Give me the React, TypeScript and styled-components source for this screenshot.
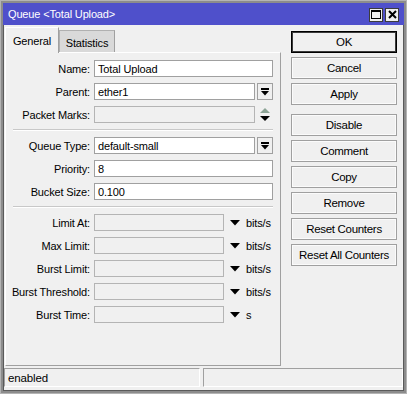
import styled, { createGlobalStyle } from "styled-components";

const GlobalStyle = createGlobalStyle`
  html, body {
    margin: 0;
    padding: 0;
    background: #f0f0f0;
  }
  body {
    font-family: "Liberation Sans", Arial, sans-serif;
    font-size: 11px;
    letter-spacing: -0.15px;
    color: #000;
  }
`;

const Window = styled.div`
  box-sizing: border-box;
  width: 407px;
  height: 394px;
  border: 3px solid #8c8c8c;
  box-shadow: inset 0 0 0 1px #5a5a5a;
  outline: 1px solid #b4b4b4;
  outline-offset: -1px;
  background: #f0f0f0;
  display: flex;
  flex-direction: column;
`;

const TitleBar = styled.div`
  height: 22px;
  flex: none;
  background: #4f50cb;
  color: #fff;
  display: flex;
  align-items: center;
  justify-content: space-between;
  padding: 0 5px 0 5px;
`;

const TitleButtons = styled.div`
  display: flex;
  gap: 2px;
  margin-top: 1px;
`;

const TitleButton = styled.div`
  box-sizing: border-box;
  width: 14px;
  height: 14px;
  background: #f0f0f0;
  border: 1px solid #3c3c3c;
  display: flex;
  align-items: center;
  justify-content: center;
`;

const Main = styled.div`
  flex: 1;
  display: flex;
  padding: 2px 7px 0 2px;
  gap: 10px;
  min-height: 0;
`;

const LeftColumn = styled.div`
  width: 276px;
  display: flex;
  flex-direction: column;
`;

const Tabs = styled.div`
  display: flex;
  align-items: flex-end;
  height: 25px;
  position: relative;
  z-index: 1;
`;

const Tab = styled.div<{ $active?: boolean }>`
  box-sizing: border-box;
  display: flex;
  align-items: center;
  justify-content: center;
  height: ${({ $active }) => ($active ? "26px" : "22px")};
  width: ${({ $active }) => ($active ? "54px" : "56px")};
  margin-bottom: ${({ $active }) => ($active ? "-1px" : "0")};
  background: ${({ $active }) => ($active ? "#f0f0f0" : "#d9d9d9")};
  border: 1px solid ${({ $active }) => ($active ? "#fff" : "#b0b0b0")};
  border-right-color: #a0a0a0;
  border-bottom: none;
  padding-top: ${({ $active }) => ($active ? "0" : "2px")};
`;

const Panel = styled.div`
  flex: 1;
  box-sizing: border-box;
  border: 1px solid #a0a0a0;
  border-top-color: #fff;
  border-left-color: #fff;
  padding: 7px 0 0 0;
  display: flex;
  flex-direction: column;
  gap: 6px;
`;

const Row = styled.div`
  display: flex;
  align-items: center;
  height: 17px;
`;

const Label = styled.div`
  width: 84px;
  margin-right: 4px;
  text-align: right;
  white-space: nowrap;
`;

const Input = styled.div<{ $width: number; $disabled?: boolean }>`
  box-sizing: border-box;
  width: ${({ $width }) => $width}px;
  height: 17px;
  border: 1px solid ${({ $disabled }) => ($disabled ? "#b4b4b4" : "#a0a0a0")};
  background: ${({ $disabled }) => ($disabled ? "#f0f0f0" : "#fff")};
  padding-left: 3px;
  display: flex;
  align-items: center;
`;

const DropButton = styled.div`
  box-sizing: border-box;
  width: 16px;
  height: 17px;
  margin-left: 2px;
  border: 1px solid #a0a0a0;
  background: #f0f0f0;
  display: flex;
  align-items: center;
  justify-content: center;
`;

const SpinIcon = styled.div`
  margin-left: 5px;
  display: flex;
`;

const UnitArrow = styled.div`
  margin-left: 6px;
  display: flex;
`;

const Unit = styled.span`
  margin-left: 6px;
`;

const Separator = styled.div`
  height: 0;
  margin: 0 7px;
  border-top: 1px solid #c8c8c8;
  border-bottom: 1px solid #fff;
`;

const ButtonColumn = styled.div`
  width: 106px;
  padding-top: 4px;
  display: flex;
  flex-direction: column;
  gap: 4px;
`;

const Button = styled.div<{ $default?: boolean; $spaced?: boolean }>`
  box-sizing: border-box;
  height: 22px;
  display: flex;
  align-items: center;
  justify-content: center;
  background: #f0f0f0;
  border: 1px solid ${({ $default }) => ($default ? "#000" : "#a0a0a0")};
  box-shadow: ${({ $default }) =>
    $default ? "inset 0 0 0 1px #3a3a3a" : "inset 0 0 0 1px #fbfbfb"};
  margin-top: ${({ $spaced }) => ($spaced ? "5px" : "0")};
  font-size: 11.5px;
  letter-spacing: -0.3px;
`;

const StatusBar = styled.div`
  flex: none;
  display: flex;
  gap: 3px;
  padding: 2px 1px 4px 1px;
`;

const StatusField = styled.div<{ $width?: number }>`
  box-sizing: border-box;
  height: 19px;
  ${({ $width }) => ($width ? `width: ${$width}px;` : "flex: 1;")}
  border: 1px solid #fff;
  border-top-color: #a0a0a0;
  border-left-color: #a0a0a0;
  padding-left: 3px;
  display: flex;
  align-items: center;
  font-size: 11.5px;
`;

const DropIcon = () => (
  <svg width="8" height="8" viewBox="0 0 8 8">
    <rect x="0" y="0" width="8" height="2" fill="#000" />
    <polygon points="0,3 8,3 4,7.5" fill="#000" />
  </svg>
);

const UpDownIcon = () => (
  <svg width="10" height="14" viewBox="0 0 10 14">
    <polygon points="5,0 10,5 0,5" fill="#8ca395" />
    <polygon points="0,8 10,8 5,13" fill="#000" />
  </svg>
);

const DownTriangle = () => (
  <svg width="10" height="6" viewBox="0 0 10 6">
    <polygon points="0,0 10,0 5,5.5" fill="#000" />
  </svg>
);

const MaximizeIcon = () => (
  <svg width="10" height="9" viewBox="0 0 10 9">
    <rect x="0.5" y="0.5" width="9" height="8" fill="none" stroke="#000" />
    <rect x="0" y="0" width="10" height="2" fill="#000" />
  </svg>
);

const CloseIcon = () => (
  <svg width="9" height="9" viewBox="0 0 9 9">
    <path d="M1 1 L8 8 M8 1 L1 8" stroke="#000" strokeWidth="2" />
  </svg>
);

const LIMITS = ["Limit At", "Max Limit", "Burst Limit", "Burst Threshold"];

const BUTTONS = [
  "Cancel",
  "Apply",
  "Disable",
  "Comment",
  "Copy",
  "Remove",
  "Reset Counters",
  "Reset All Counters",
];

export default function App() {
  return (
    <>
      <GlobalStyle />
      <Window>
        <TitleBar>
          <span>Queue &lt;Total Upload&gt;</span>
          <TitleButtons>
            <TitleButton>
              <MaximizeIcon />
            </TitleButton>
            <TitleButton>
              <CloseIcon />
            </TitleButton>
          </TitleButtons>
        </TitleBar>
        <Main>
          <LeftColumn>
            <Tabs>
              <Tab $active>General</Tab>
              <Tab>Statistics</Tab>
            </Tabs>
            <Panel>
              <Row>
                <Label>Name:</Label>
                <Input $width={179}>Total Upload</Input>
              </Row>
              <Row>
                <Label>Parent:</Label>
                <Input $width={161}>ether1</Input>
                <DropButton>
                  <DropIcon />
                </DropButton>
              </Row>
              <Row>
                <Label>Packet Marks:</Label>
                <Input $width={161} $disabled />
                <SpinIcon>
                  <UpDownIcon />
                </SpinIcon>
              </Row>
              <Separator />
              <Row>
                <Label>Queue Type:</Label>
                <Input $width={161}>default-small</Input>
                <DropButton>
                  <DropIcon />
                </DropButton>
              </Row>
              <Row>
                <Label>Priority:</Label>
                <Input $width={179}>8</Input>
              </Row>
              <Row>
                <Label>Bucket Size:</Label>
                <Input $width={179}>0.100</Input>
              </Row>
              <Separator />
              {LIMITS.map((name) => (
                <Row key={name}>
                  <Label>{name}:</Label>
                  <Input $width={130} $disabled />
                  <UnitArrow>
                    <DownTriangle />
                  </UnitArrow>
                  <Unit>bits/s</Unit>
                </Row>
              ))}
              <Row>
                <Label>Burst Time:</Label>
                <Input $width={130} $disabled />
                <UnitArrow>
                  <DownTriangle />
                </UnitArrow>
                <Unit>s</Unit>
              </Row>
            </Panel>
          </LeftColumn>
          <ButtonColumn>
            <Button $default>OK</Button>
            {BUTTONS.map((label) => (
              <Button key={label} $spaced={label === "Disable"}>
                {label}
              </Button>
            ))}
          </ButtonColumn>
        </Main>
        <StatusBar>
          <StatusField $width={196}>enabled</StatusField>
          <StatusField />
        </StatusBar>
      </Window>
    </>
  );
}
